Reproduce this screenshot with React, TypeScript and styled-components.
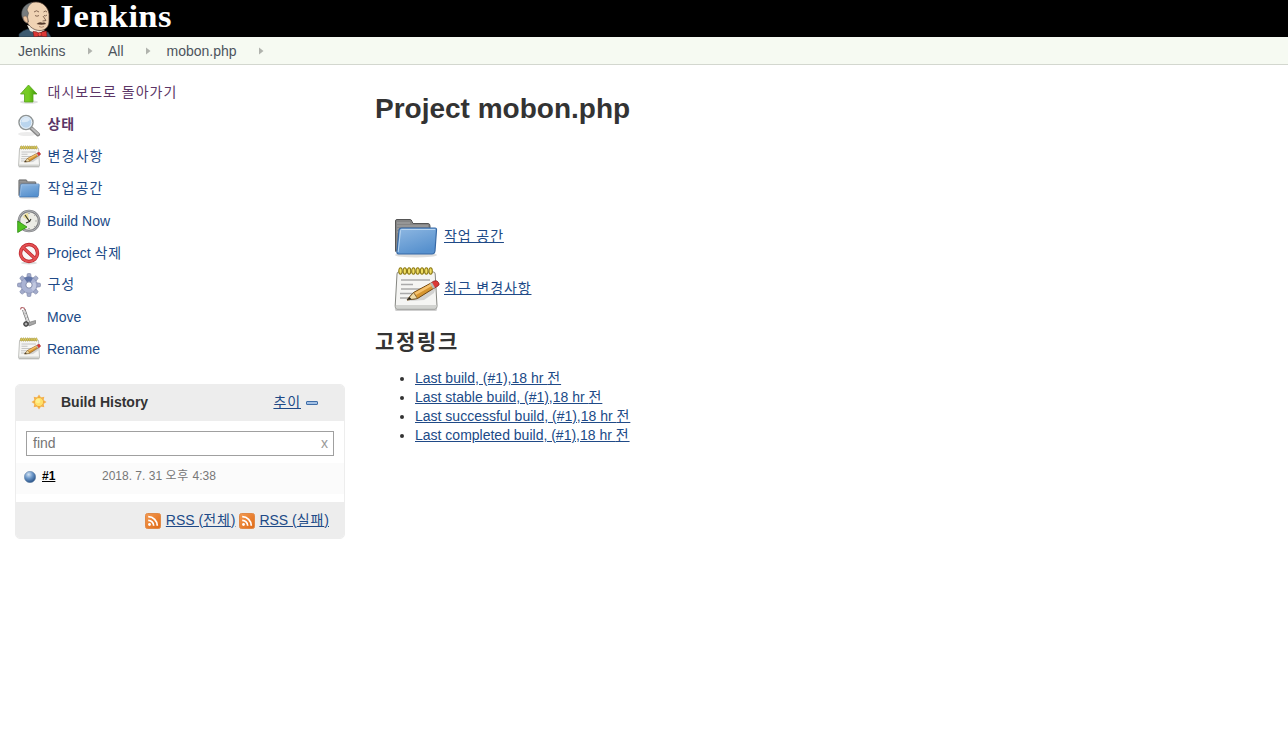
import React from 'react';
import styled, { createGlobalStyle } from 'styled-components';

const GlobalStyle = createGlobalStyle`
  * { box-sizing: border-box; }
  html, body { margin: 0; background: #fff; }
  body {
    color: #333;
    font-family: "Liberation Sans", "Noto Sans CJK KR", sans-serif;
    font-size: 14px;
    line-height: 19px;
  }
`;

const Page = styled.div`
  height: 731px;
  overflow: hidden;
  display: flex;
  flex-direction: column;
`;

const Header = styled.header`
  height: 37px;
  background: #000;
  display: flex;
  padding-left: 18px;
  overflow: hidden;
`;

const LogoText = styled.span`
  font-family: "Liberation Serif", serif;
  font-weight: 700;
  font-size: 31px;
  line-height: 33px;
  letter-spacing: 0.3px;
  transform: scaleX(1.115);
  transform-origin: left;
  color: #fff;
  margin-left: 5px;
`;

const Breadcrumbs = styled.nav`
  height: 28px;
  background: #f6faf2;
  border-bottom: 1px solid #d3d7cf;
  display: flex;
  align-items: center;
  padding: 1px 0 0 18px;
  color: #4d545d;
`;

const Crumb = styled.span<{ $width: number }>`
  width: ${(p) => p.$width}px;
  white-space: nowrap;
`;

const CrumbArrow = styled.svg<{ $gap: number }>`
  width: 5px;
  height: 8px;
  margin-right: ${(p) => p.$gap}px;
`;

const Body = styled.div`
  display: flex;
  padding-left: 15px;
`;

const Side = styled.aside`
  width: 330px;
  padding-top: 12px;
`;

const Main = styled.main`
  margin-left: 30px;
  padding-top: 26px;
`;

const Task = styled.a<{ $visited?: boolean; $bold?: boolean }>`
  height: 32px;
  padding: 0 0 0 2px;
  display: flex;
  align-items: center;
  color: ${(p) => (p.$visited ? '#5c3566' : '#204a87')};
  font-weight: ${(p) => (p.$bold ? 700 : 400)};
  white-space: nowrap;
`;

const TaskLabel = styled.span<{ $hangul?: boolean }>`
  margin-left: 6px;
  padding: ${(p) => (p.$hangul ? '0 0 2px 0.5px' : '0')};
`;

const Ko = styled.span<{ $ls?: number }>`
  letter-spacing: ${(p) => p.$ls ?? 0.9}px;
`;

const Icon = styled.svg<{ $size: number }>`
  width: ${(p) => p.$size}px;
  height: ${(p) => p.$size}px;
  flex: none;
  display: block;
`;

const Butler = styled.svg`
  width: 33px;
  height: 37px;
  flex: none;
  display: block;
`;

const Panel = styled.section`
  margin-top: 19px;
  width: 330px;
  height: 155px;
  border: 1px solid #ededed;
  border-radius: 5px;
  overflow: hidden;
  display: flex;
  flex-direction: column;
`;

const PanelHead = styled.div`
  height: 36px;
  background: #ededed;
  display: flex;
  align-items: center;
  padding: 0 26px 2px 15px;
`;

const PanelTitle = styled.b`
  margin-left: 14px;
  flex: 1;
`;

const Link = styled.a`
  color: #204a87;
  text-decoration: underline;
  white-space: nowrap;
`;

const Collapse = styled.span`
  width: 12px;
  height: 4px;
  margin: 2px 0 0 5px;
  background: #a3c0e4;
  border: 1px solid #3f6ea8;
  border-radius: 1px;
`;

const Find = styled.div`
  height: 25px;
  margin: 10px 10px 7px;
  padding: 0 5px 0 6px;
  border: 1px solid #a0a0a0;
  background: #fff;
  display: flex;
  align-items: center;
  justify-content: space-between;
  color: #757575;
  flex: none;
`;

const Clear = styled.span`
  color: #999;
`;

const BuildRow = styled.div`
  height: 31px;
  background: #fbfbfb;
  display: flex;
  align-items: center;
  padding: 0 0 4px 8px;
  font-size: 12px;
  flex: none;
`;

const BuildNumber = styled.a`
  margin-left: 6px;
  width: 60px;
  font-weight: 700;
  color: #000;
  text-decoration: underline;
`;

const BuildTime = styled.span`
  color: #777;
`;

const PanelFoot = styled.div`
  margin-top: 8px;
  flex: 1;
  background: #ededed;
  display: flex;
  align-items: center;
  justify-content: flex-end;
  padding: 1px 15px 0 0;
`;

const FeedLink = styled(Link)`
  margin: 0 3.5px 1px 4.5px;
  &:last-child { margin-right: 0; }
`;

const Title = styled.h1`
  margin: 0;
  font-size: 28px;
  line-height: 36px;
  height: 119px;
  white-space: nowrap;
`;

const Shortcut = styled.div`
  height: 52px;
  padding-left: 17px;
  display: flex;
  align-items: center;
  gap: 4px;
`;

const ShortcutIcon = styled.div`
  margin-top: 3px;
`;

const SectionTitle = styled.h2`
  margin: 14px 0 14px;
  font-size: 21px;
  line-height: 27px;
`;

const LinkList = styled.ul`
  margin: 0;
  padding-left: 40px;
`;

const ButlerHead = () => (
  <Butler viewBox="0 0 33 37">
    <path d="M1 37V34Q5 30 10 29L21 33 30 32 33 37Z" fill="#3c5a70" stroke="#1f2f3b" strokeWidth=".6" />
    <path d="M9 25L12 31 20 34 27 30Z" fill="#f1ece2" />
    <path d="M6 12C7 6 11 2 18 2C25 2 30 7 31 14L31 21C31 27 27 30.500 22 30.500C16 30.500 12 27 9.500 23C7 20 5.500 16 6 12Z" fill="#f0d3b4" stroke="#5a4436" strokeWidth=".7" />
    <path d="M4 17C2.500 10 6 4 14 2.500Q9.500 6 9 10L10.500 13 9.500 17 10.500 22 8.500 23Q5 21 4 17Z" fill="#777c7e" stroke="#3f4345" strokeWidth=".5" />
    <path d="M5 17.500Q7.500 14.500 9.500 18L10 22.500Q6.500 23.500 5 17.500Z" fill="#e9c3a0" stroke="#7b5b47" strokeWidth=".5" />
    <path d="M16 12Q18.500 9.500 21 12M25.500 12Q27.500 10 29 12M17 15.500Q19 17 21 15.500M26 15.500Q27.500 16.500 29 15M25 16L28 20.500 24.500 21" fill="none" stroke="#6b4d3b" strokeWidth=".8" />
    <path d="M18.500 24Q21.500 21 24.500 22.800Q27 22 28 24Q23.500 25.500 18.500 24Z" fill="#54392b" />
    <path d="M21 26.500Q23.500 28 26 26.500" fill="none" stroke="#9b6b55" strokeWidth=".7" />
    <path d="M15 31.500Q18 31 21.500 33.500Q25 30.500 28.500 31L29 36.500Q25 37 22 35.500Q19 37 16 36.800Z" fill="#dc3735" stroke="#751b19" strokeWidth=".6" />
    <ellipse cx="21.800" cy="34.300" rx="1.700" ry="2" fill="#ef5148" stroke="#751b19" strokeWidth=".5" />
  </Butler>
);

const Arrow = ({ gap }: { gap: number }) => (
  <CrumbArrow $gap={gap} viewBox="0 0 5 8"><path d="M0 .5L4.500 4 0 7.500Z" fill="#b0b3ad" /></CrumbArrow>
);

const UpIcon = () => (
  <Icon $size={24} viewBox="0 0 24 24">
    <defs><linearGradient id="up" x2="1"><stop stopColor="#7fc82d" /><stop offset=".5" stopColor="#73cd20" /><stop offset="1" stopColor="#3e9509" /></linearGradient></defs>
    <ellipse cx="12" cy="21" rx="9" ry="1.800" fill="#dedede" />
    <path d="M11.500 4L20 13H16V21H7.500V13H3.500Z" fill="url(#up)" stroke="#55a31b" strokeWidth=".8" />
  </Icon>
);

const SearchIcon = () => (
  <Icon $size={24} viewBox="0 0 24 24">
    <ellipse cx="10" cy="21" rx="9" ry="2" fill="#ececec" />
    <path d="M14 15L21 21.500" stroke="#858585" strokeWidth="4" strokeLinecap="round" />
    <path d="M15 15.500L21 21" stroke="#bbb" strokeWidth="2" strokeLinecap="round" />
    <circle cx="9" cy="9.500" r="7" fill="#bad5ee" stroke="#909595" strokeWidth="1.500" />
    <circle cx="9" cy="9.500" r="5.800" fill="none" stroke="#edf4fa" />
    <path d="M4.500 9A4.500 4.500 0 0 1 13 7Q10 10 4.500 9Z" fill="#dceaf7" />
  </Icon>
);

const NotepadIcon = ({ size = 24 }: { size?: number }) => (
  <Icon $size={size} viewBox="0 0 48 48">
    <rect x="3" y="42" width="42" height="3" rx="1.500" fill="#cfcfcf" />
    <path d="M6.500 6H41.500Q43 6 43.200 8L45 40Q45 43 43 43H5Q3 43 3.200 40L5 8Q5 6 6.500 6Z" fill="#f5f5f3" stroke="#858681" />
    <path d="M4 39H44.500V41Q44.500 42.500 43 42.500H5Q3.500 42.500 3.500 41Z" fill="#d2d3d0" />
    <path d="M9 14H38M9 18.500H21M9 23H38M8 27.500H28M8 32H17" stroke="#aaa" strokeWidth="1.300" />
    {[8.500, 12.800, 17.100, 21.400, 25.700, 30, 34.300, 38.600].map((x) => (
      <ellipse key={x} cx={x} cy="5" rx="1.700" ry="3.200" fill="#f1df65" stroke="#8e7b16" strokeWidth="1.100" />
    ))}
    <path d="M17 35L32 34 42 27 44 21Z" fill="#bbb" opacity=".6" />
    <path d="M15 34L21.500 26.500 40 16.500 43 21.500 25.500 32.500Z" fill="#d6952f" stroke="#704713" strokeWidth="1" />
    <path d="M22 27L40 17 41.500 19 24 29Z" fill="#f5c16c" />
    <path d="M15 34L21.500 26.500 25.500 32.500Z" fill="#efdca9" stroke="#654b24" strokeWidth=".7" />
    <path d="M15 34L17.500 31 19.500 33.200Z" fill="#222" />
    <path d="M39.500 16.500L42 15Q45.500 14 46.500 16.500Q48 18.500 46 20L42.500 22Z" fill="#dc3936" stroke="#8f2424" strokeWidth=".8" />
    <path d="M38 17.500L40 16.300 43 21.500 41 22.700Z" fill="#b9bbb5" />
  </Icon>
);

const FolderIcon = ({ size = 24 }: { size?: number }) => (
  <Icon $size={size} viewBox="0 0 48 48">
    <defs><linearGradient id="folder" x2=".5" y2="1"><stop stopColor="#8fb8e2" /><stop offset="1" stopColor="#5791ce" /></linearGradient></defs>
    <ellipse cx="24" cy="41" rx="21" ry="2.500" fill="#ddd" />
    <path d="M3.500 7Q3.500 5.500 5 5.500H18Q19.500 5.500 20 7.500L21 9.500H36Q38 9.500 38 12V34H6Q3.500 40 3.500 36Z" fill="#858585" stroke="#555" />
    <path d="M5 9H18M5 12H36M5 15H36M5 18H36" stroke="#a7a7a7" strokeWidth="1" />
    <path d="M9.500 14H43Q44.700 14 44.500 16L43 37Q42.500 40 40 40H6.500Q4.500 40 5 37L7 16Q7.500 14 9.500 14Z" fill="url(#folder)" stroke="#3769a5" strokeWidth="1.200" />
    <path d="M6.200 38L8.500 16.500Q8.700 15.500 9.700 15.500H43.200" fill="none" stroke="#b8d5f0" />
  </Icon>
);

const ClockIcon = () => (
  <Icon $size={24} viewBox="0 0 24 24">
    <circle cx="12" cy="12" r="10" fill="#ecece5" stroke="#808184" strokeWidth="2.600" />
    <circle cx="12" cy="12" r="10.300" fill="none" stroke="#bdbfc1" strokeWidth=".8" />
    <path d="M12 12L6 8Q7 4.500 11 4Z" fill="#eddf9a" />
    <path d="M8 6L12.500 12.500 9 14M12.500 12.500L14 10" fill="none" stroke="#35352d" strokeWidth="1.100" />
    <path d="M12 4V5M18.500 12H19.500M12 19V20M17 7L17.500 6.500M17 17L17.500 17.500" stroke="#777" />
    <path d="M.7 12L10 18 .7 23.500Z" fill="#50c321" stroke="#28890e" strokeWidth=".8" />
  </Icon>
);

const DeleteIcon = () => (
  <Icon $size={24} viewBox="0 0 24 24">
    <ellipse cx="12" cy="22" rx="8" ry="1.500" fill="#ddd" />
    <circle cx="12" cy="12" r="8.500" fill="#f9f7f7" stroke="#b91e25" strokeWidth="3.400" />
    <path d="M6 6.500L18 17.500" stroke="#b91e25" strokeWidth="3.400" />
    <circle cx="12" cy="12" r="8.500" fill="none" stroke="#e35053" strokeWidth="2.200" />
    <path d="M6 6.500L18 17.500" stroke="#e35053" strokeWidth="2.200" />
  </Icon>
);

const GearIcon = () => (
  <Icon $size={24} viewBox="0 0 24 24">
    <g fill="#a3accb" stroke="#7a83a6" strokeWidth=".6">
      {[0, 45, 90, 135, 180, 225, 270, 315].map((a) => (
        <path key={a} d="M9.500 6L10.300 .8Q12 0 13.700 .8L14.500 6Z" transform={`rotate(${a} 12 12)`} />
      ))}
      <circle cx="12" cy="12" r="8" />
    </g>
    <circle cx="12" cy="12" r="7.700" fill="#aab3d3" />
    <path d="M12 12L7 5Q12 2 16 5Z" fill="#6376a7" />
    <path d="M12 12L18 9Q21 14 16 18Z" fill="#c1c8df" />
    <circle cx="12" cy="12" r="3.200" fill="#fff" stroke="#8089aa" />
  </Icon>
);

const MoveIcon = () => (
  <Icon $size={24} viewBox="0 0 24 24">
    <path d="M3.500 4.500Q4 1.500 7 3L8.500 6" fill="none" stroke="#b76b70" strokeWidth="1.200" />
    <path d="M5.500 5L10 18M8 4L12.500 17M6.500 9L9.500 8M8 13L11 12" stroke="#888" strokeWidth="1" />
    <path d="M6.500 5L11 17" stroke="#d2d2d2" strokeWidth="1.300" />
    <path d="M10 18L18.500 15.500V18.500L12 21Z" fill="#a7a7a7" stroke="#777" strokeWidth=".7" />
    <circle cx="9" cy="19" r="2.300" fill="#777" stroke="#333" />
    <circle cx="9" cy="19" r=".8" fill="#eee" />
  </Icon>
);

const SunIcon = () => (
  <Icon $size={16} viewBox="0 0 16 16">
    <g fill="#f5b14b">
      {[0, 45, 90, 135, 180, 225, 270, 315].map((a) => (
        <path key={a} d="M6 3.500L8 .5 10 3.500Z" transform={`rotate(${a} 8 8)`} />
      ))}
    </g>
    <circle cx="8" cy="8" r="4.600" fill="#ffe16a" stroke="#f0aa40" />
    <circle cx="7" cy="7" r="2.300" fill="#fff08f" />
  </Icon>
);

const BallIcon = () => (
  <Icon $size={12} viewBox="0 0 12 12">
    <defs><radialGradient id="ball" cx=".38" cy=".28" r=".75"><stop stopColor="#d3e3f3" /><stop offset=".45" stopColor="#6e99ca" /><stop offset="1" stopColor="#234d83" /></radialGradient></defs>
    <circle cx="6" cy="6" r="5.700" fill="url(#ball)" stroke="#6482a5" strokeWidth=".5" />
  </Icon>
);

const FeedIcon = () => (
  <Icon $size={16} viewBox="0 0 16 16">
    <defs><linearGradient id="feed" x2="1" y2="1"><stop stopColor="#f49a51" /><stop offset="1" stopColor="#df6a16" /></linearGradient></defs>
    <rect x=".5" y=".5" width="15" height="15" rx="2" fill="url(#feed)" stroke="#e08a48" />
    <circle cx="4.500" cy="11.500" r="1.400" fill="#fff" />
    <path d="M3.200 7.300A5.500 5.500 0 0 1 8.700 12.800M3.200 3.700A9.100 9.100 0 0 1 12.300 12.800" fill="none" stroke="#fff" strokeWidth="1.700" />
  </Icon>
);

const tasks = [
  { icon: <UpIcon />, label: <Ko $ls={1}>대시보드로 돌아가기</Ko>, visited: true, hangul: true },
  { icon: <SearchIcon />, label: <Ko $ls={0.9}>상태</Ko>, visited: true, bold: true, hangul: true },
  { icon: <NotepadIcon />, label: <Ko $ls={1.1}>변경사항</Ko>, hangul: true },
  { icon: <FolderIcon />, label: <Ko $ls={1.1}>작업공간</Ko>, hangul: true },
  { icon: <ClockIcon />, label: 'Build Now' },
  { icon: <DeleteIcon />, label: <>Project <Ko>삭제</Ko></> },
  { icon: <GearIcon />, label: <Ko>구성</Ko>, hangul: true },
  { icon: <MoveIcon />, label: 'Move' },
  { icon: <NotepadIcon />, label: 'Rename' },
];

const permalinks = ['Last build', 'Last stable build', 'Last successful build', 'Last completed build'];

export default function App() {
  return (
    <Page>
      <GlobalStyle />
      <Header>
        <ButlerHead />
        <LogoText>Jenkins</LogoText>
      </Header>
      <Breadcrumbs>
        <Crumb $width={70}>Jenkins</Crumb><Arrow gap={15} />
        <Crumb $width={38}>All</Crumb><Arrow gap={15.5} />
        <Crumb $width={92.5}>mobon.php</Crumb><Arrow gap={0} />
      </Breadcrumbs>
      <Body>
        <Side>
          {tasks.map((t, i) => (
            <Task key={i} $visited={t.visited} $bold={t.bold}>
              {t.icon}
              <TaskLabel $hangul={t.hangul}>{t.label}</TaskLabel>
            </Task>
          ))}
          <Panel>
            <PanelHead>
              <SunIcon />
              <PanelTitle>Build History</PanelTitle>
              <Link><Ko>추이</Ko></Link>
              <Collapse />
            </PanelHead>
            <Find><span>find</span><Clear>x</Clear></Find>
            <BuildRow>
              <BallIcon />
              <BuildNumber>#1</BuildNumber>
              <BuildTime>2018. 7. 31 <Ko $ls={0.9}>오후</Ko> 4:38</BuildTime>
            </BuildRow>
            <PanelFoot>
              <FeedIcon /><FeedLink>RSS (<Ko>전체</Ko>)</FeedLink>
              <FeedIcon /><FeedLink>RSS (<Ko>실패</Ko>)</FeedLink>
            </PanelFoot>
          </Panel>
        </Side>
        <Main>
          <Title>Project mobon.php</Title>
          <Shortcut><ShortcutIcon><FolderIcon size={48} /></ShortcutIcon><Link><Ko>작업 공간</Ko></Link></Shortcut>
          <Shortcut><ShortcutIcon><NotepadIcon size={48} /></ShortcutIcon><Link><Ko>최근 변경사항</Ko></Link></Shortcut>
          <SectionTitle><Ko $ls={1.7}>고정링크</Ko></SectionTitle>
          <LinkList>
            {permalinks.map((name) => (
              <li key={name}><Link>{name}, (#1),18 hr <Ko>전</Ko></Link></li>
            ))}
          </LinkList>
        </Main>
      </Body>
    </Page>
  );
}
